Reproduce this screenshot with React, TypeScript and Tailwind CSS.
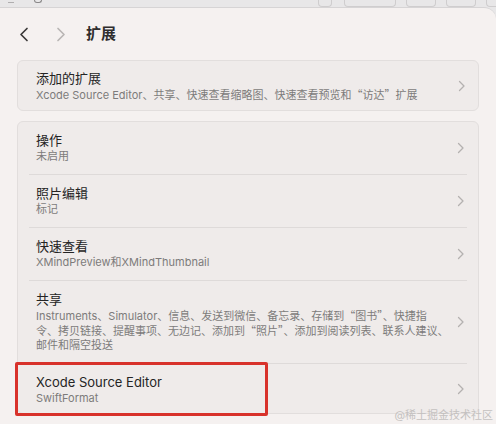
import React from 'react';

const font = { fontFamily: 'Inter, "Noto Sans CJK SC", sans-serif' };
const cjk = { fontFamily: '"Noto Sans CJK SC", sans-serif' };

type Row = { title: string; detail: React.ReactNode[] };

const Q = ({ children }: { children: React.ReactNode }) => <span style={cjk}>{children}</span>;

const rows: Row[] = [
  { title: '操作', detail: ['未启用'] },
  { title: '照片编辑', detail: ['标记'] },
  { title: '快速查看', detail: ['XMindPreview和XMindThumbnail'] },
  {
    title: '共享',
    detail: [
      <>
        Instruments、Simulator、信息、发送到微信、备忘录、存储到<Q>“</Q>图书<Q>”</Q>、快捷指
      </>,
      <>
        令、拷贝链接、提醒事项、无边记、添加到<Q>“</Q>照片<Q>”</Q>、添加到阅读列表、联系人建议、
      </>,
      '邮件和隔空投送',
    ],
  },
  { title: 'Xcode Source Editor', detail: ['SwiftFormat'] },
];

function Chevron({ className }: { className?: string }) {
  return (
    <svg width="8" height="12" viewBox="0 0 8 12" className={className}>
      <path d="M1.5 1.5 6 6l-4.5 4.5" fill="none" stroke="currentColor" strokeWidth="1.3" strokeLinecap="round" strokeLinejoin="round" />
    </svg>
  );
}

function ExtensionRow({ row, first, last }: { row: Row; first: boolean; last: boolean }) {
  return (
    <div className={`flex items-center justify-between px-[7px] ${first ? '' : 'border-t border-[#dedad9]'}`}>
      <div className={`flex flex-col pt-[9px] ${last ? 'pb-[8px]' : 'pb-[11px]'}`}>
        <span className="text-[13px] leading-[18px] text-[#242424]">{row.title}</span>
        <div className="flex flex-col">
          {row.detail.map((line, i) => (
            <span key={i} className="text-[11px] leading-[14px] text-[#7d7b7b]">
              {line}
            </span>
          ))}
        </div>
      </div>
      <Chevron className="mr-[-5px] text-[#b4b1b0]" />
    </div>
  );
}

export default function App() {
  return (
    <div className="relative h-[424px] w-[496px] overflow-hidden bg-[#e8e7e8]" style={font}>
      <div className="flex h-[7px] items-start">
        <div className="ml-[8px] h-[3px] w-[6px] border-b border-[#b0aeaf]" />
        <div className="ml-[20px] h-[3px] w-[8px] rounded-b-sm border-x border-b border-[#8a8889]" />
        <div className="ml-auto h-[7px] w-[14px] rounded-b-[4px] border-x border-b border-[#cfcdce]" />
        <div className="ml-[12px] h-[7px] w-[52px] rounded-b-[4px] border-x border-b border-[#cfcdce]" />
        <div className="ml-[10px] h-[7px] w-[30px] rounded-b-[4px] border-x border-b border-[#cfcdce]" />
        <div className="ml-[10px] h-[7px] w-[30px] rounded-b-[4px] border-x border-b border-[#cfcdce]" />
        <div className="ml-[10px] h-[7px] w-[10px] rounded-bl-[4px] border-l border-b border-[#cfcdce]" />
      </div>
      <div className="h-[417px] rounded-tr-[12px] border-t border-[#d6d4d5] bg-[#f5f1f0]">
        <div className="flex h-[52px] items-center pl-[19px]">
          <svg width="10" height="15" viewBox="0 0 10 15">
            <path d="M8 1.5 2 7.5l6 6" fill="none" stroke="#3a3838" strokeWidth="1.7" strokeLinecap="round" strokeLinejoin="round" />
          </svg>
          <svg width="10" height="15" viewBox="0 0 10 15" className="ml-[27px]">
            <path d="M2 1.5 8 7.5l-6 6" fill="none" stroke="#b9b6b5" strokeWidth="1.7" strokeLinecap="round" strokeLinejoin="round" />
          </svg>
          <span className="ml-[20px] text-[15px] font-bold text-[#2f2d2d]">扩展</span>
        </div>
        <div className="mx-[17px] flex h-[51px] items-center justify-between rounded-[6px] border border-[#e2dedd] bg-[#efebea] pl-[18px] pr-[12px]">
          <div className="flex flex-col">
            <span className="text-[13px] leading-[18px] text-[#242424]">添加的扩展</span>
            <span className="text-[11px] leading-[14px] text-[#7d7b7b]">
              Xcode Source Editor、共享、快速查看缩略图、快速查看预览和<Q>“</Q>访达<Q>”</Q>扩展
            </span>
          </div>
          <Chevron className="text-[#b4b1b0]" />
        </div>
        <div className="mx-[17px] mt-[10px] rounded-[6px] border border-[#e2dedd] bg-[#efebea] px-[11px]">
          {rows.map((row, i) => (
            <ExtensionRow key={row.title} row={row} first={i === 0} last={i === rows.length - 1} />
          ))}
        </div>
      </div>
      <div className="absolute left-[15px] top-[362px] h-[54px] w-[253px] rounded-[2px] border-[3px] border-[#d8322b]" />
      <span className="absolute right-[3px] top-[407px] text-[11px] leading-[16px] text-[#c4c1c0]">
        @稀土掘金技术社区
      </span>
    </div>
  );
}
